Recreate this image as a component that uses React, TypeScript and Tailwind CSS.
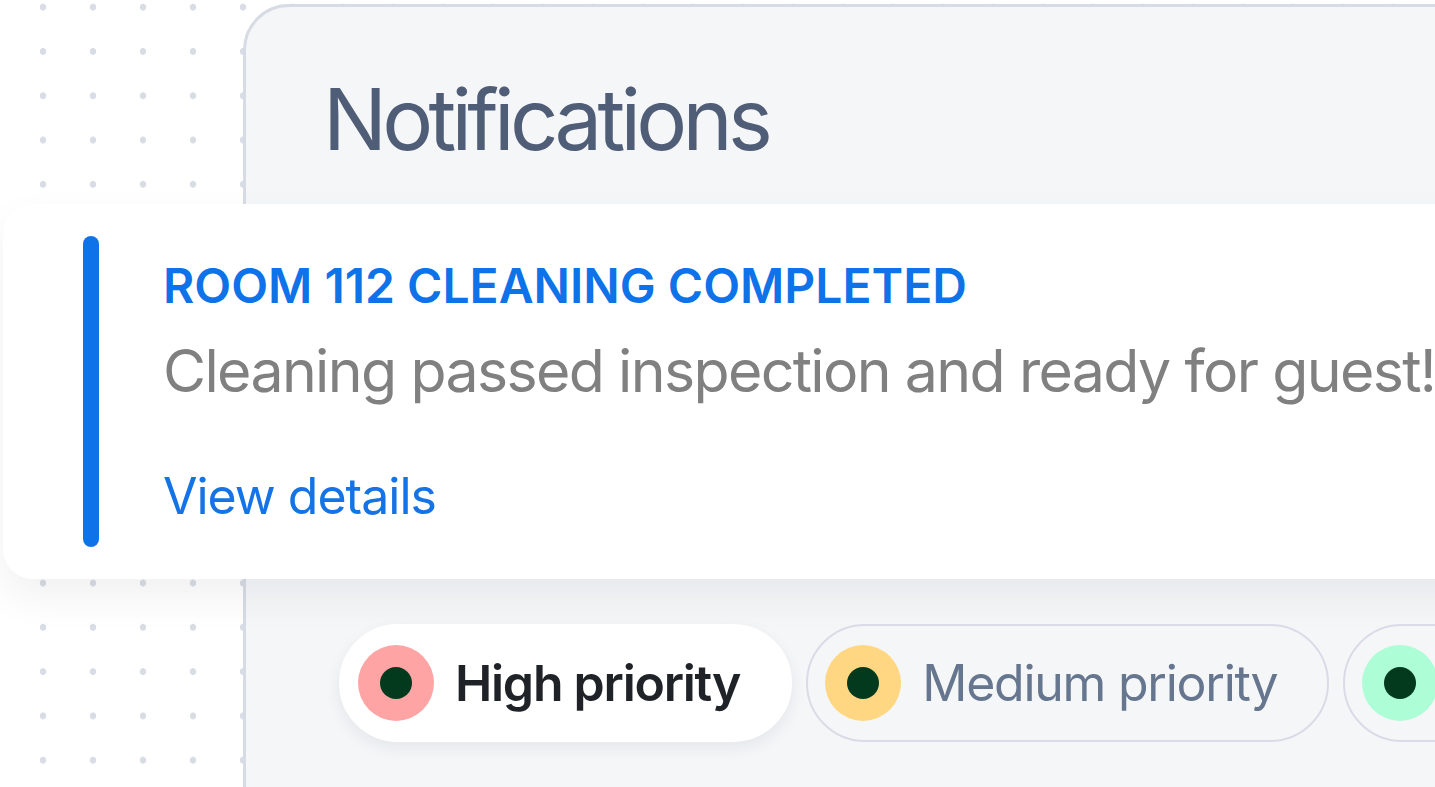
import React from "react"

const pills = [
    { label: "High priority", ring: "bg-[#ffa4a4]", active: true },
    { label: "Medium priority", ring: "bg-[#ffd782]", active: false },
    { label: "Low priority", ring: "bg-[#adfdd6]", active: false },
]

const Pill = ({ label, ring, active }: { label: string, ring: string, active: boolean }) => (
    <div className={`flex shrink-0 items-center h-[118px] rounded-full border-2 pl-[17px] pr-[50px] gap-[21px] ${active ? 'bg-white border-white shadow-[0_6px_16px_rgba(15,23,42,0.07)]' : 'border-[#d9dce6]'}`}>
        <div className={`flex items-center justify-center w-[76px] h-[76px] rounded-full ${ring}`}>
            <div className="w-[32px] h-[32px] rounded-full bg-[#033a1e]" />
        </div>
        <span className={`text-[50px] leading-none whitespace-nowrap tracking-[-0.025em] ${active ? 'font-semibold text-[#1f2328]' : 'text-[#66768f]'}`}>
            {label}
        </span>
    </div>
)

export default function App() {
    return (
        <div className="relative w-[1435px] h-[787px] overflow-hidden bg-white font-['Inter',_'Noto_Sans',_sans-serif] bg-[radial-gradient(circle,#d8dce4_3px,transparent_3.6px)] bg-[length:50px_44.3px] bg-position-[18px_-15px]">
            <div className="ml-[243px] mt-[4px] w-[1300px] h-[900px] rounded-tl-[46px] border-[3px] border-[#d6dbe4] bg-[#f5f6f8]">
                <h1 className="pl-[77px] pt-[70px] text-[85px] leading-none font-normal text-[#4f5d77] tracking-[-0.056em]">
                    Notifications
                </h1>

                <div className="-ml-[243px] mt-[42px] w-[1600px] h-[375px] rounded-[30px] bg-white shadow-[0_18px_40px_rgba(15,23,42,0.06)] flex items-center pl-[80px]">
                    <div className="w-[16px] h-[311px] rounded-full bg-[#0e72e8]" />
                    <div className="ml-[64px] flex flex-col">
                        <span className="text-[48px] leading-none font-semibold text-[#0e72e8] whitespace-nowrap">
                            ROOM 112 CLEANING COMPLETED
                        </span>
                        <span className="mt-[31px] text-[59px] leading-none text-[#808080] whitespace-nowrap tracking-[-0.028em]">
                            Cleaning passed inspection and ready for guest!
                        </span>
                        <span className="mt-[71px] text-[50px] leading-none text-[#1473e6] whitespace-nowrap tracking-[-0.02em]">
                            View details
                        </span>
                    </div>
                </div>

                <div className="mt-[45px] pl-[93px] flex gap-[14px]">
                    {pills.map((p, index) => (
                        <Pill key={index + 'pill'} label={p.label} ring={p.ring} active={p.active} />
                    ))}
                </div>
            </div>
        </div>
    )
}
